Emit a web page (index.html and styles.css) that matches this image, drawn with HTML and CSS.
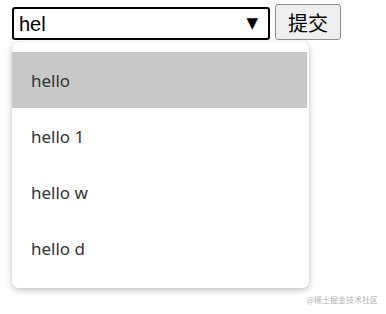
FILE: index.html
```html
<!DOCTYPE html>
<html>
<head>
<meta charset="utf-8">
<link rel="stylesheet" href="styles.css">
</head>
<body>
<div class="page">
  <div class="bar">
    <div class="combo">
      <span class="value">hel</span>
      <span class="arrow">▼</span>
    </div>
    <button class="submit">提交</button>
  </div>
  <ul class="menu">
    <li class="item active">hello</li>
    <li class="item">hello 1</li>
    <li class="item">hello w</li>
    <li class="item">hello d</li>
  </ul>
  <div class="mark">@稀土掘金技术社区</div>
</div>
</body>
</html>
```
FILE: styles.css
```css
html, body {
  margin: 0;
  padding: 0;
  background: #fff;
}
.page {
  position: relative;
  width: 386px;
  height: 314px;
  overflow: hidden;
}
.bar {
  display: flex;
  align-items: flex-end;
  gap: 5px;
  padding: 4px 0 0 12px;
  height: 36px;
}
.combo {
  box-sizing: border-box;
  width: 258px;
  height: 33px;
  border: 2px solid #000;
  border-radius: 3px;
  display: flex;
  align-items: center;
  justify-content: space-between;
  padding: 0 10px 0 5px;
  font-family: "Liberation Sans", Arial, sans-serif;
  font-size: 20px;
  color: #000;
}
.value {
  line-height: 1;
  margin-top: 1px;
}
.arrow {
  font-family: "DejaVu Sans", sans-serif;
  font-size: 15px;
  line-height: 1;
}
.submit {
  box-sizing: border-box;
  width: 66px;
  height: 36px;
  margin: 0;
  padding: 0;
  border: 1px solid #8f8f8f;
  border-radius: 3px;
  background: #efefef;
  font-family: "Noto Sans CJK SC", sans-serif;
  font-size: 20px;
  color: #000;
}
.menu {
  position: absolute;
  left: 12px;
  top: 42px;
  width: 297px;
  box-sizing: border-box;
  margin: 0;
  padding: 10px 2px 12px 0;
  list-style: none;
  background: #fff;
  border-radius: 6px;
  box-shadow: 0 2px 6px rgba(0, 0, 0, 0.25), 0 0 1px rgba(0, 0, 0, 0.15);
}
.item {
  height: 56px;
  display: flex;
  align-items: center;
  padding-left: 19px;
  font-family: "Noto Sans", "Open Sans", sans-serif;
  font-size: 17px;
  color: #333;
}
.item.active {
  background: #c8c8c8;
}
.mark {
  position: absolute;
  right: 8px;
  top: 294px;
  font-family: "Noto Sans CJK SC", sans-serif;
  font-size: 8px;
  color: #b0b0b0;
}
```
